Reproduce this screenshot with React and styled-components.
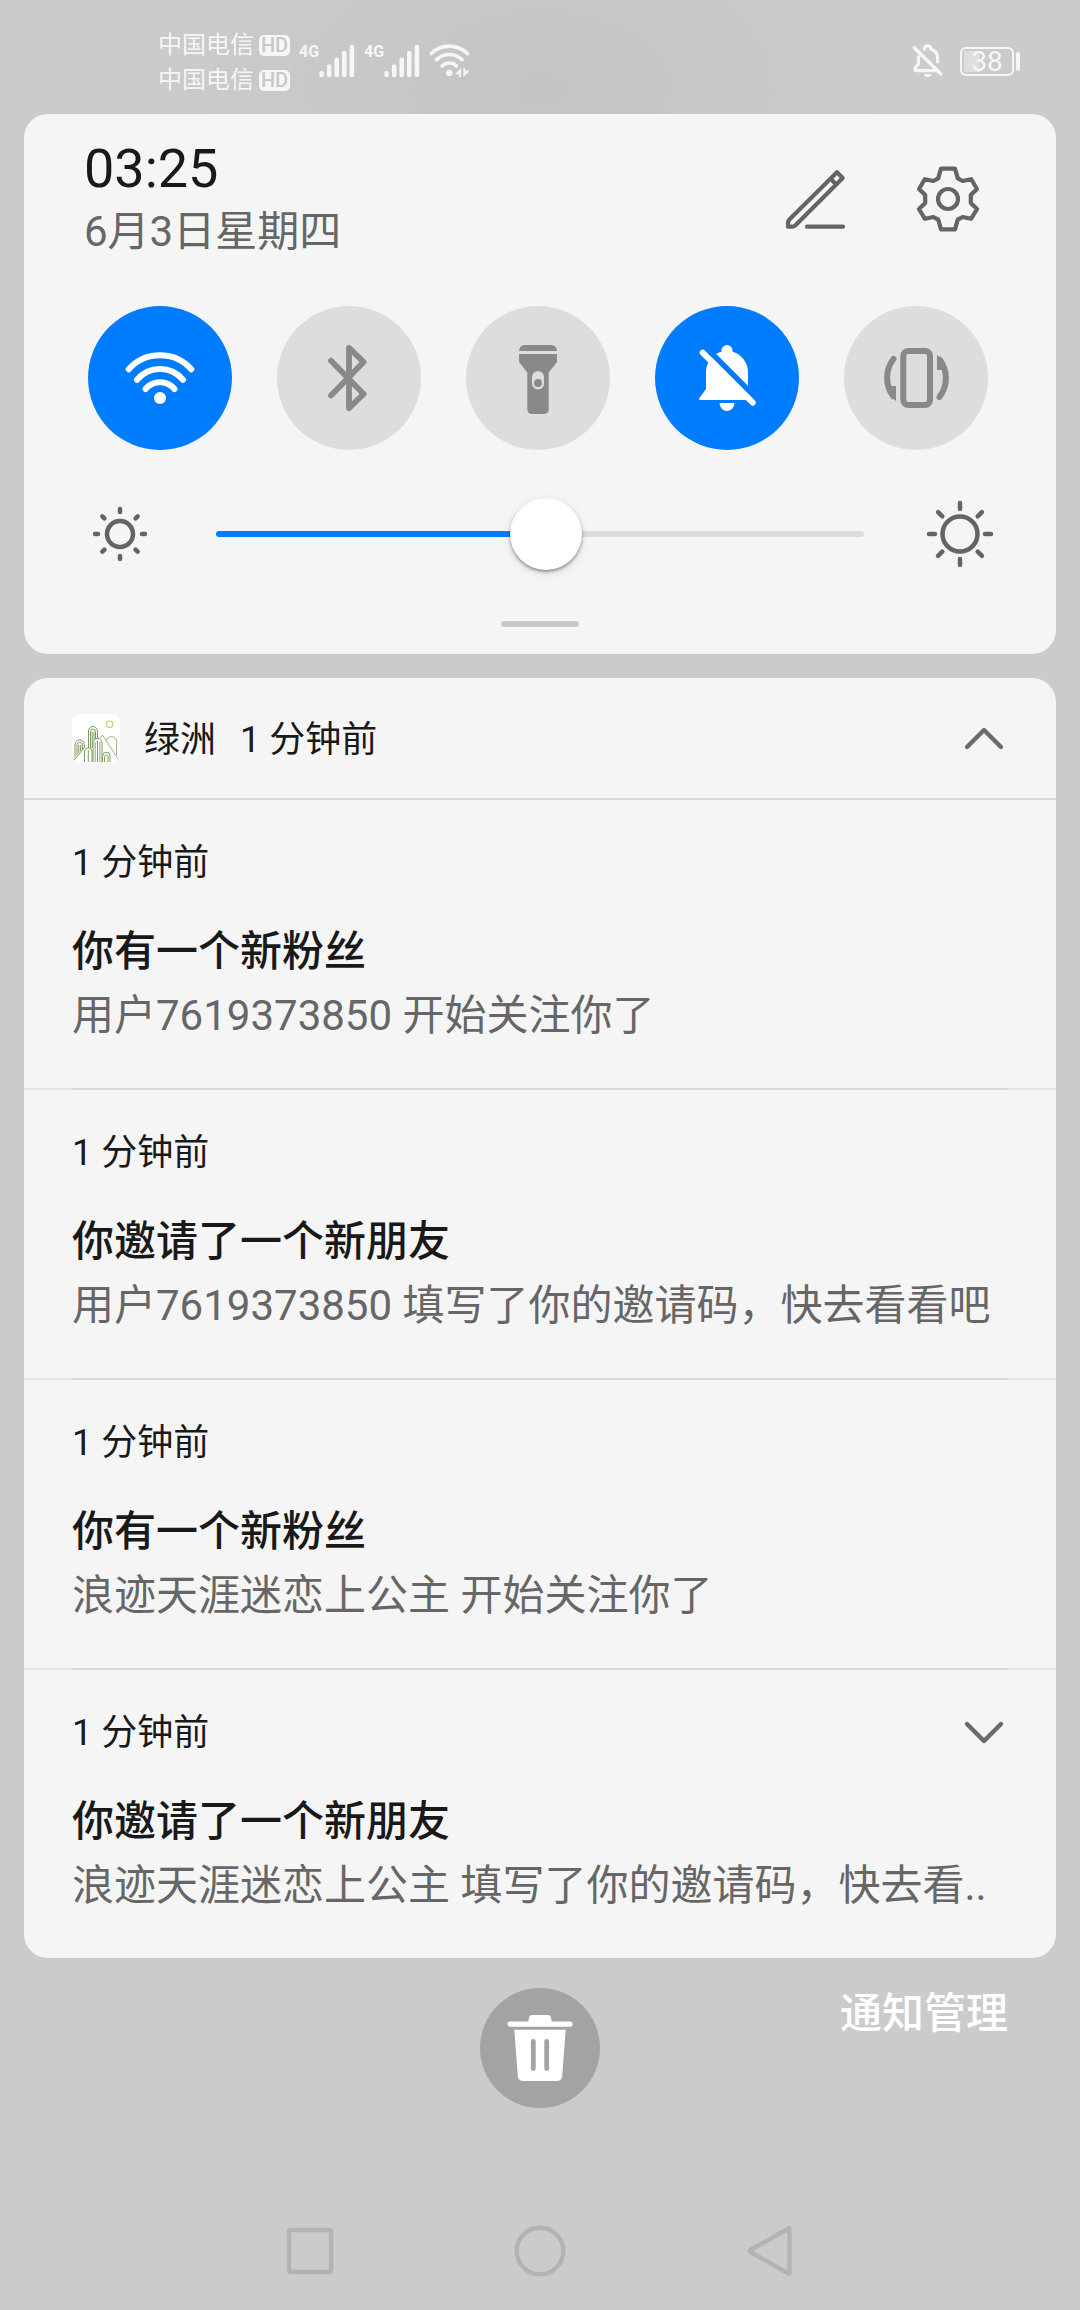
import React, { useState } from 'react';
import styled, { createGlobalStyle } from 'styled-components';

const GlobalStyle = createGlobalStyle`
  * {
    box-sizing: border-box;
  }
  body {
    margin: 0;
    background: #cbcbcb;
    font-family: Roboto, "Noto Sans CJK SC", sans-serif;
    color: #191919;
  }
  button {
    padding: 0;
    border: 0;
    background: none;
    font: inherit;
    color: inherit;
    cursor: pointer;
  }
  svg {
    display: block;
    flex: none;
  }
  h1, h2, h3, p, ul {
    margin: 0;
    padding: 0;
    font-weight: 400;
  }
`

const Screen = styled.div`
  min-height: 100vh;
  display: flex;
  flex-direction: column;
  background: radial-gradient(ellipse 36% 240px at 50% 90px, #c4c4c4, #cbcbcb);
`

/* status bar */

const StatusBar = styled.header`
  height: 114px;
  padding: 8px 60px 0 158px;
  display: flex;
  align-items: center;
  justify-content: space-between;
  color: #f6f6f6;
`

const StatusGroup = styled.div`
  display: flex;
  align-items: center;
  gap: ${props => props.$gap}px;
`

const Carriers = styled.div`
  padding-top: 4px;
`

const Carrier = styled.div`
  display: flex;
  align-items: center;
  gap: 5px;
  font-size: 24px;
  line-height: 35px;
`

const HdBadge = styled.span`
  width: 31px;
  height: 21px;
  border-radius: 5px;
  background: #f6f6f6;
  color: #c8c8c8;
  font-size: 20px;
  font-weight: 500;
  line-height: 21px;
  text-align: center;
`

const Signal = styled.div`
  display: flex;
  align-items: flex-start;
  font-family: "Liberation Sans Narrow", Roboto, sans-serif;
  font-size: 16px;
  font-weight: 700;
  line-height: 16px;
`

const Battery = styled.div`
  display: flex;
  align-items: center;
  gap: 2px;
  &::after {
    content: '';
    width: 4px;
    height: 19px;
    border-radius: 2px;
    background: #f6f6f6;
  }
`

const BatteryCell = styled.div`
  width: 54px;
  height: 29px;
  border: 2px solid #f6f6f6;
  border-radius: 6px;
  background: linear-gradient(#dedede, #dedede) 2px 2px / 16px 21px no-repeat;
  font-size: 28px;
  line-height: 26px;
  text-align: center;
`

/* panels */

const Panels = styled.main`
  padding: 0 24px;
  display: flex;
  flex-direction: column;
  gap: 24px;
`

const Panel = styled.section`
  border-radius: 24px;
  background: #f5f5f5;
`

const ControlPanel = styled(Panel)`
  padding: 22px 60px 27px;
`

const ControlHead = styled.div`
  margin-right: 12px;
  display: flex;
  align-items: center;
  justify-content: space-between;
`

const Clock = styled.h1`
  font-size: 54px;
  font-weight: 400;
  line-height: 66px;
`

const Today = styled.p`
  font-size: 42px;
  line-height: 60px;
  color: #666;
`

const HeadActions = styled.div`
  display: flex;
  gap: 60px;
  color: #646464;
`

const Toggles = styled.div`
  margin: 44px 8px 48px 4px;
  display: flex;
  justify-content: space-between;
`

const Toggle = styled.button`
  width: 144px;
  height: 144px;
  border-radius: 50%;
  background: ${props => props.$on ? '#007dff' : '#dddddd'};
  color: ${props => props.$on ? '#ffffff' : '#898989'};
`

const Brightness = styled.div`
  display: flex;
  align-items: center;
  gap: 60px;
  color: #646464;
`

const Slider = styled.input`
  appearance: none;
  flex: 1;
  min-width: 0;
  height: 72px;
  margin: 0;
  background: transparent;
  &::-webkit-slider-runnable-track {
    height: 6px;
    border-radius: 3px;
    background: linear-gradient(to right, #007dff var(--level), #dddddd var(--level));
  }
  &::-webkit-slider-thumb {
    appearance: none;
    width: 72px;
    height: 72px;
    margin-top: -33px;
    border-radius: 50%;
    background: #fff;
    box-shadow: 0 2px 3px rgba(0, 0, 0, 0.35), 0 3px 10px rgba(0, 0, 0, 0.12);
  }
`

const Grip = styled.div`
  width: 78px;
  height: 6px;
  margin: 51px auto 0;
  border-radius: 3px;
  background: #c9c9c9;
`

/* notifications */

const GroupHead = styled.div`
  height: 122px;
  padding: 0 48px;
  border-bottom: 2px solid #d9d9d9;
  display: flex;
  align-items: center;
`

const GroupTitle = styled.div`
  padding-top: 4px;
  margin-left: 24px;
  display: flex;
  align-items: baseline;
  gap: 24px;
`

const AppName = styled.h2`
  font-size: 36px;
  line-height: 52px;
`

const Expand = styled.button`
  margin-left: auto;
  color: #6a6a6a;
`

const List = styled.ul`
  list-style: none;
`

const Item = styled.li`
  padding: 38px 48px 40px;
  white-space: nowrap;
`

/* lighter across the full width, darker between the text margins */
const Divider = styled.li`
  padding: 0 48px;
  background: #e6e6e6;
  &::before {
    content: '';
    display: block;
    height: 2px;
    background: #d9d9d9;
  }
`

const ItemHead = styled.div`
  height: 50px;
  margin-bottom: 32px;
  display: flex;
  align-items: center;
`

const Time = styled.span`
  font-size: 36px;
  line-height: 52px;
`

const Title = styled.h3`
  font-size: 42px;
  font-weight: 500;
  line-height: 64px;
`

const Message = styled.p`
  font-size: 42px;
  line-height: 64px;
  color: #666;
`

/* bottom */

const Actions = styled.footer`
  padding: 30px 72px;
  display: grid;
  grid-template-columns: 1fr auto 1fr;
  align-items: start;
`

const ClearAll = styled.button`
  grid-column: 2;
  width: 120px;
  height: 120px;
  border-radius: 50%;
  background: #a3a3a3;
  color: #fff;
`

const Manage = styled.a`
  justify-self: end;
  font-size: 42px;
  font-weight: 500;
  line-height: 52px;
  color: #fff;
  text-decoration: none;
`

const NavBar = styled.nav`
  height: 118px;
  margin-top: auto;
  padding: 0 18%;
  display: flex;
  color: #b3b3b3;
`

const NavButton = styled.button`
  flex: 1;
  display: flex;
  align-items: center;
  justify-content: center;
`

const line = {
  fill: 'none',
  stroke: 'currentColor',
  strokeLinecap: 'round',
  strokeLinejoin: 'round',
}

const SignalBars = () => (
  <svg width="36" height="34" viewBox="0 0 36 34" {...line} strokeWidth="4.6">
    <path d="M2.6 29.3V31M10.2 22.5V31M17.7 15.8V31M25.3 9V31M32.9 3V31" />
  </svg>
)

const StatusWifi = () => (
  <svg width="42" height="36" viewBox="0 0 42 36" {...line} strokeWidth="3.6">
    <path d="M2.2 10.5A26 26 0 0 1 38.4 10.5M7.5 16.8A18 18 0 0 1 33.1 16.8M13.2 23A10 10 0 0 1 27.4 23" />
    <circle cx="20.3" cy="30" r="3.3" fill="currentColor" stroke="none" />
    <path d="M26 31.2L32 25V34H30V31.2ZM34.4 34V25H36V27.6H40.8Z" fill="currentColor" stroke="none" />
  </svg>
)

const StatusBell = () => (
  <svg width="36" height="36" viewBox="0 0 36 36" {...line} strokeWidth="3.2">
    <path d="M8.5 13.5V20.5L5 25.5V27.6H25M14.4 6.4C14.8 1.8 20.6 1.8 21 6.2C25 7.6 27.6 10.6 27.6 14.5V18.8" />
    <path d="M4.3 4.8L30.6 30.8" strokeWidth="3.6" />
    <path d="M13.8 31H21.6C21 35.2 14.4 35.2 13.8 31Z" fill="currentColor" stroke="none" />
  </svg>
)

const EditIcon = () => (
  <svg width="72" height="72" viewBox="0 0 72 72" {...line} strokeWidth="4.2">
    <path d="M57 9.3L62.7 15L15.5 62.2Q14 63.7 12 63.7H8V59.5Q8 57.8 9.4 56.6ZM50.8 16L56.4 21.6M27 63.7H63" />
  </svg>
)

const GearIcon = () => (
  <svg width="72" height="72" viewBox="-36 -36 72 72" {...line} strokeWidth="4.2">
    <path d="M-7 -30.3H7L9.8 -20.6L14.6 -18L23.2 -19.8L29 -10L22.8 -4V4L29 10L23.2 19.8L14.6 18L9.8 20.6L7 30.3H-7L-9.8 20.6L-14.6 18L-23.2 19.8L-29 10L-22.8 4V-4L-29 -10L-23.2 -19.8L-14.6 -18L-9.8 -20.6Z" />
    <circle r="10" />
  </svg>
)

const WifiIcon = () => (
  <svg viewBox="0 0 144 144" {...line} strokeWidth="6">
    <path d="M40.7 63.3A42 42 0 0 1 103.3 63.3M49 73.7A30 30 0 0 1 95 73.7M57.5 83A19 19 0 0 1 86.5 83" />
    <circle cx="72" cy="92" r="6" fill="currentColor" stroke="none" />
  </svg>
)

const BluetoothIcon = () => (
  <svg viewBox="0 0 144 144" {...line} strokeWidth="5.8">
    <path d="M54 54.7L86.6 88L72 102.2V41.8L86.6 56L54 89.5" />
  </svg>
)

const TorchIcon = () => (
  <svg viewBox="0 0 144 144" fill="currentColor">
    <path d="M53 45Q53.5 39 59 39H85Q90.5 39 91 45ZM53 48H91V56L82.7 66.5V103Q82.7 108 77.7 108H66.3Q61.3 108 61.3 103V66.5L53 56Z" />
    <rect x="66" y="65" width="12" height="18.4" rx="6" fill="#dddddd" />
    <circle cx="72" cy="77" r="3.9" />
  </svg>
)

const BellOffIcon = () => (
  <svg viewBox="0 0 144 144" fill="currentColor">
    <circle cx="72" cy="44.7" r="5.6" />
    <path d="M51 66A21 21 0 0 1 93 66V83L100 92Q101 94 99 94H45.5Q43.4 94 44.4 92L51 83ZM64.5 97H79.5C78.5 107.6 65.5 107.6 64.5 97Z" />
    <path d="M48 38.8L105 95.8" stroke="#007dff" strokeWidth="5.6" />
    <path d="M47.7 46.7L97.7 96.7" stroke="currentColor" strokeWidth="6" strokeLinecap="round" />
  </svg>
)

const VibrateIcon = () => (
  <svg viewBox="0 0 144 144" {...line} strokeWidth="6">
    <rect x="59.3" y="45" width="26.7" height="54" rx="5" />
    <path d="M49.5 53A31 31 0 0 0 49 90M95.5 91A31 31 0 0 0 96 54" />
    <path d="M44 80H52V95L48 92ZM101 64H93V49L97 52Z" fill="currentColor" stroke="none" />
  </svg>
)

const SunIcon = ({ r, inner, outer }) => (
  <svg width="72" height="72" viewBox="-36 -36 72 72" {...line} strokeWidth="4.5">
    <circle r={r} />
    {[0, 45, 90, 135, 180, 225, 270, 315].map(a => (
      <path key={a} d={`M0 ${-inner}V${-outer}`} transform={`rotate(${a})`} />
    ))}
  </svg>
)

const Chevron = ({ up }) => (
  <svg width="48" height="48" viewBox="0 0 48 48" {...line} strokeWidth="4.4">
    <path d={up ? 'M7 33L24 16L41 33' : 'M7 15L24 32L41 15'} />
  </svg>
)

const OasisLogo = () => (
  <svg width="48" height="48" viewBox="0 0 48 48" fill="none" stroke="#6f9150" strokeWidth="0.9">
    <rect width="48" height="48" rx="8" fill="#fff" stroke="none" />
    <circle cx="37.6" cy="10.3" r="3.4" stroke="#c4b23c" />
    <path d="M16.5 34V17A4.500 4.500 0 0 1 25.5 17V25M18.5 34V17.5A2.500 2.500 0 0 1 23.5 17.5V25M20.2 34V17.5M22 26V17.5" />
    <path d="M3 43V31A4.600 4.600 0 0 1 12.2 30V34M5 41V31A2.700 2.700 0 0 1 10.4 31V36M6.8 39V31M8.6 37V31" />
    <path d="M2 46L12.5 33.5M12.5 48V37A3.800 3.800 0 0 1 20 37V48M16.3 48V36" />
    <path d="M21 48V29A4.500 4.500 0 0 1 30 29V48M25.5 48V27" />
    <path d="M23.2 48V28M27.8 48V28" stroke="#a9c494" strokeWidth="1.4" />
    <path d="M28 24.5L30.5 21L46 45M34 26.5A5.300 5.300 0 0 1 44.6 30V41" stroke="#8fae76" />
    <path d="M30.5 48V42A3.700 3.700 0 0 1 38 42V48M32.5 48V42.5A1.800 1.800 0 0 1 36 42.5V48" />
  </svg>
)

const TrashIcon = () => (
  <svg viewBox="0 0 120 120" fill="currentColor">
    <path d="M48.2 34L49.2 29Q49.7 27 51.7 27H68.3Q70.3 27 70.8 29L71.8 34Z" />
    <rect x="27.5" y="33.6" width="65" height="5.2" rx="2.6" />
    <path d="M34.3 41.7H85.7L82.2 88Q81.8 93 76.8 93H43.2Q38.2 93 37.8 88Z" />
    <path d="M53.3 53.3V80.5M66.7 53.3V80.5" stroke="#a3a3a3" strokeWidth="4.8" strokeLinecap="round" />
  </svg>
)

const toggles = [
  { label: 'WLAN', on: true, Icon: WifiIcon },
  { label: '蓝牙', on: false, Icon: BluetoothIcon },
  { label: '手电筒', on: false, Icon: TorchIcon },
  { label: '静音', on: true, Icon: BellOffIcon },
  { label: '自动旋转', on: false, Icon: VibrateIcon },
]

const notifications = [
  { title: '你有一个新粉丝', text: '用户7619373850 开始关注你了' },
  { title: '你邀请了一个新朋友', text: '用户7619373850 填写了你的邀请码，快去看看吧' },
  { title: '你有一个新粉丝', text: '浪迹天涯迷恋上公主 开始关注你了' },
  { title: '你邀请了一个新朋友', text: '浪迹天涯迷恋上公主 填写了你的邀请码，快去看..', more: true },
]

export default function App() {
  const [level, setLevel] = useState(51)

  return (
    <Screen lang="zh-CN">
      <GlobalStyle />
      <StatusBar>
        <StatusGroup $gap={9}>
          <Carriers>
            <Carrier>中国电信<HdBadge>HD</HdBadge></Carrier>
            <Carrier>中国电信<HdBadge>HD</HdBadge></Carrier>
          </Carriers>
          <Signal>4G<SignalBars /></Signal>
          <Signal>4G<SignalBars /></Signal>
          <StatusWifi />
        </StatusGroup>
        <StatusGroup $gap={14}>
          <StatusBell />
          <Battery><BatteryCell>38</BatteryCell></Battery>
        </StatusGroup>
      </StatusBar>

      <Panels>
        <ControlPanel>
          <ControlHead>
            <div>
              <Clock>03:25</Clock>
              <Today>6月3日星期四</Today>
            </div>
            <HeadActions>
              <button aria-label="编辑"><EditIcon /></button>
              <button aria-label="设置"><GearIcon /></button>
            </HeadActions>
          </ControlHead>
          <Toggles>
            {toggles.map(({ label, on, Icon }) => (
              <Toggle key={label} $on={on} aria-label={label} aria-pressed={on}><Icon /></Toggle>
            ))}
          </Toggles>
          <Brightness>
            <SunIcon r={13} inner={22} outer={25} />
            <Slider
              type="range"
              aria-label="亮度"
              value={level}
              onChange={e => setLevel(Number(e.target.value))}
              style={{ '--level': `${level}%` }}
            />
            <SunIcon r={17.5} inner={25} outer={31} />
          </Brightness>
          <Grip />
        </ControlPanel>

        <Panel>
          <GroupHead>
            <OasisLogo />
            <GroupTitle>
              <AppName>绿洲</AppName>
              <Time>1 分钟前</Time>
            </GroupTitle>
            <Expand aria-label="收起"><Chevron up /></Expand>
          </GroupHead>
          <List>
            {notifications.map((n, i) => (
              <React.Fragment key={i}>
                {i > 0 && <Divider role="separator" />}
                <Item>
                  <ItemHead>
                    <Time>1 分钟前</Time>
                    {n.more && <Expand aria-label="展开"><Chevron /></Expand>}
                  </ItemHead>
                  <Title>{n.title}</Title>
                  <Message>{n.text}</Message>
                </Item>
              </React.Fragment>
            ))}
          </List>
        </Panel>
      </Panels>

      <Actions>
        <ClearAll aria-label="清除全部"><TrashIcon /></ClearAll>
        <Manage href="#manage">通知管理</Manage>
      </Actions>

      <NavBar>
        <NavButton aria-label="最近任务">
          <svg width="54" height="54" viewBox="0 0 54 54" {...line} strokeWidth="4.4">
            <rect x="6" y="6" width="42" height="42" rx="1.5" />
          </svg>
        </NavButton>
        <NavButton aria-label="主屏幕">
          <svg width="54" height="54" viewBox="0 0 54 54" {...line} strokeWidth="4.4">
            <circle cx="27" cy="27" r="23.3" />
          </svg>
        </NavButton>
        <NavButton aria-label="返回">
          <svg width="54" height="54" viewBox="0 0 54 54" {...line} strokeWidth="4.4">
            <path d="M46.5 4.5V49.5Q46.5 50 45.5 49.5L7.5 28Q6 27 7.5 26L45.5 4.5Q46.5 4 46.5 4.5Z" />
          </svg>
        </NavButton>
      </NavBar>
    </Screen>
  )
}
